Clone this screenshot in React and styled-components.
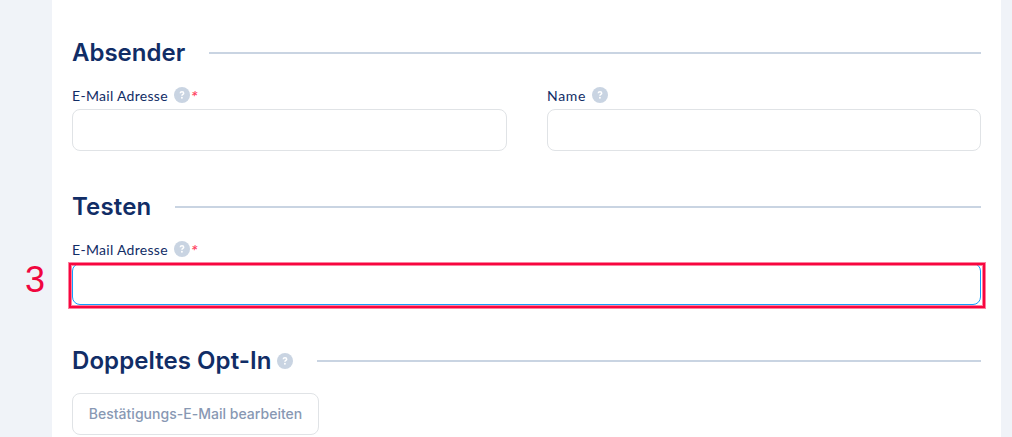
import React from 'react';
import styled, { createGlobalStyle } from 'styled-components';

const GlobalStyle = createGlobalStyle`
* { box-sizing: border-box; }
body {
    margin: 0;
    background: #f0f3f8;
    overflow: hidden;
}
`

const Page = styled.div`
height: 437px;
padding: 0 11px 0 52px;
overflow: hidden;
font-family: Inter, "Liberation Sans", sans-serif;
`

const Card = styled.main`
height: 437px;
padding: 33px 20px 0;
background: #ffffff;
color: #112d66;
`

const Section = styled.section`
height: 154px;
`

const SectionHeader = styled.div`
display: flex;
align-items: center;
height: 40px;
`

const SectionTitle = styled.h2`
margin: 0;
font-size: 24px;
font-weight: 600;
line-height: 40px;
letter-spacing: ${(props) => props.$spacing || '0'};
white-space: nowrap;
`

const Line = styled.div`
flex: 1;
height: 2px;
margin-left: 24px;
background: #c9d4e2;
`

const HelpIcon = styled.svg`
flex: none;
display: block;
width: 16px;
height: 16px;
margin-left: 6px;
`

const Fields = styled.div`
display: grid;
grid-template-columns: ${(props) => props.$columns || '1fr'};
column-gap: 40px;
padding-top: 13px;
`

const Label = styled.label`
display: flex;
align-items: center;
height: 18px;
margin-bottom: 5px;
`

const LabelText = styled.span`
width: ${(props) => props.$width};
padding-top: 2px;
font-family: Lato, sans-serif;
font-size: 14px;
line-height: 18px;
letter-spacing: ${(props) => props.$spacing || '0.3px'};
white-space: nowrap;
`

const Required = styled.span`
margin-left: 1px;
padding-top: 1px;
color: #ff4060;
font-family: Inter, sans-serif;
font-size: 13px;
font-style: italic;
line-height: 18px;
`

const InputWrapper = styled.div`
position: relative;
height: 42px;
`

const Input = styled.input`
display: block;
width: 100%;
height: 42px;
padding: 0 16px;
border: 1px solid ${(props) => (props.$active ? '#109fff' : '#e0e3e6')};
border-radius: 8px;
background: #ffffff;
outline: none;
`

const Marker = styled.div`
position: absolute;
top: 0;
right: -4px;
bottom: -3px;
left: -3px;
border: 2px solid #f8063f;
box-shadow: 0 0 0 1px rgba(248, 6, 63, 0.5), inset 0 0 0 1px rgba(248, 6, 63, 0.5);
pointer-events: none;
`

const StepNumber = styled.span`
position: absolute;
top: -4px;
left: -47px;
color: #f0063f;
font-family: "Liberation Sans", Arial, sans-serif;
font-size: 36px;
line-height: 42px;
`

const EditButton = styled.button`
display: block;
width: 247px;
height: 42px;
margin-top: 12px;
padding: 0 0 2px;
border: 1px solid #e0e3e6;
border-radius: 8px;
background: #ffffff;
color: #8898b3;
font-family: Inter, sans-serif;
font-size: 14px;
font-weight: 500;
letter-spacing: 0.02px;
white-space: nowrap;
`

const Help = () => (
    <HelpIcon viewBox="0 0 16 16">
        <circle cx="8" cy="8" r="8" fill="#c9d4e2" />
        <path d="M6.2 6.3c.1-1 .8-1.5 1.8-1.5s1.7.5 1.7 1.4c0 1.3-1.8 1.2-1.8 2.6" fill="none" stroke="#fff" strokeWidth="1.5" />
        <circle cx="7.9" cy="10.8" r="0.95" fill="#fff" />
    </HelpIcon>
)

const Field = ({ label, labelWidth, spacing, required, active, step }) => (
    <div>
        <Label>
            <LabelText $width={labelWidth} $spacing={spacing}>{label}</LabelText>
            <Help />
            {required && <Required>*</Required>}
        </Label>
        <InputWrapper>
            <Input $active={active} aria-label={label} />
            {step && <Marker />}
            {step && <StepNumber>{step}</StepNumber>}
        </InputWrapper>
    </div>
)

const App = () => {
    return (
        <>
            <GlobalStyle />
            <Page>
                <Card>
                    <Section>
                        <SectionHeader>
                            <SectionTitle>Absender</SectionTitle>
                            <Line />
                        </SectionHeader>
                        <Fields $columns="435px 1fr">
                            <Field label="E-Mail Adresse" labelWidth="96px" required />
                            <Field label="Name" labelWidth="39px" spacing="0.7px" />
                        </Fields>
                    </Section>
                    <Section>
                        <SectionHeader>
                            <SectionTitle $spacing="0.15px">Testen</SectionTitle>
                            <Line />
                        </SectionHeader>
                        <Fields>
                            <Field label="E-Mail Adresse" labelWidth="96px" required active step="3" />
                        </Fields>
                    </Section>
                    <Section>
                        <SectionHeader>
                            <SectionTitle $spacing="0.07px">Doppeltes Opt-In</SectionTitle>
                            <Help />
                            <Line />
                        </SectionHeader>
                        <EditButton>Bestätigungs-E-Mail bearbeiten</EditButton>
                    </Section>
                </Card>
            </Page>
        </>
    );
};

export default App;
